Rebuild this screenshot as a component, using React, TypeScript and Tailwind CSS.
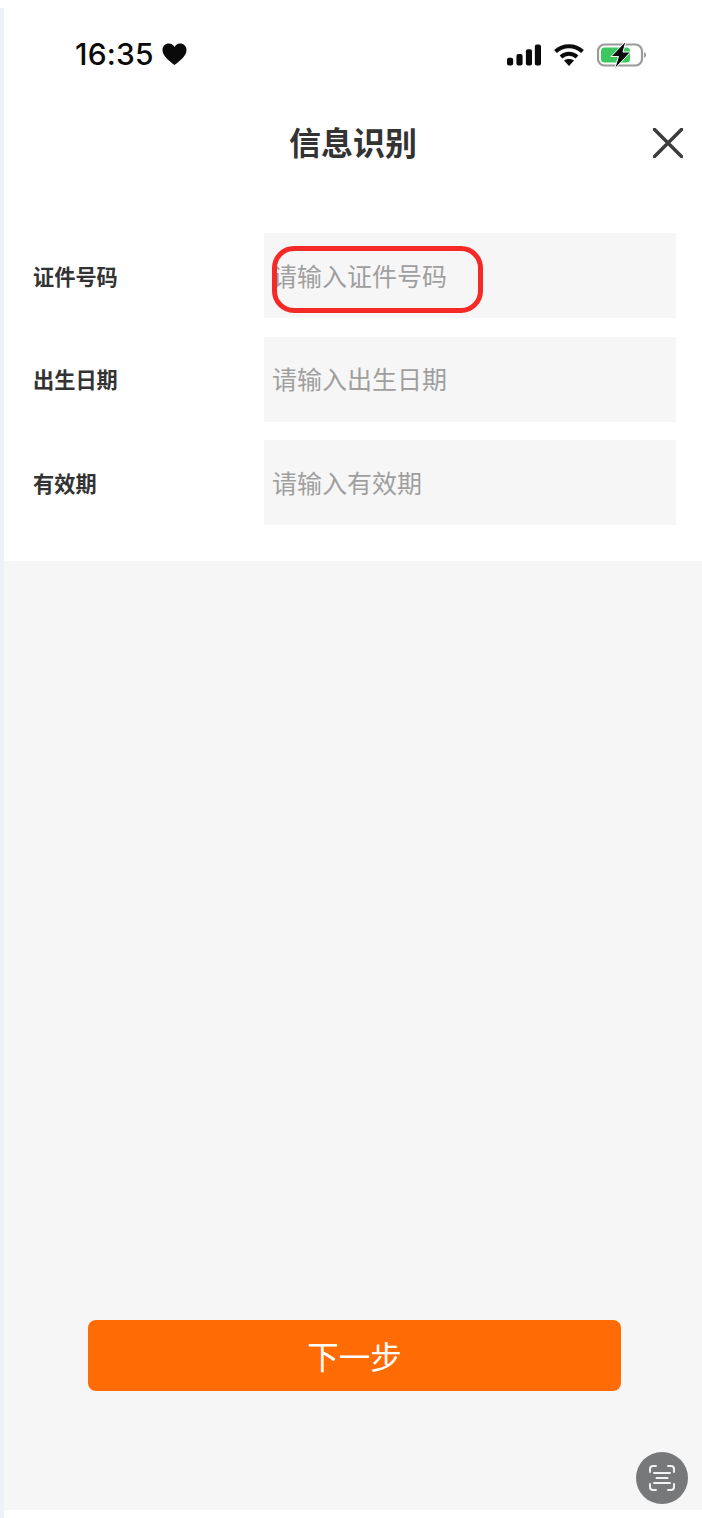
const CJK = "font-['Noto_Sans_CJK_SC','Noto_Sans',sans-serif]";

const FIELDS = [
  { label: "证件号码", placeholder: "请输入证件号码" },
  { label: "出生日期", placeholder: "请输入出生日期" },
  { label: "有效期", placeholder: "请输入有效期" },
];

function StatusIcons() {
  return (
    <div className="flex items-center">
      <svg width="34" height="22" viewBox="0 0 36 22" className="block">
        <rect x="0" y="14" width="6.500" height="8" rx="2" fill="#0a0a0a" />
        <rect x="10" y="10" width="6.500" height="12" rx="2" fill="#0a0a0a" />
        <rect x="20" y="5" width="6.500" height="17" rx="2" fill="#0a0a0a" />
        <rect x="29.500" y="0" width="6.500" height="22" rx="2" fill="#0a0a0a" />
      </svg>
      <svg width="30" height="22" viewBox="0 0 30 22" className="ml-[13px] block">
        <path d="M1.500 7.500C9 .5 21 .5 28.500 7.500" fill="none" stroke="#0a0a0a" strokeWidth="4" />
        <path d="M7 13c4.600-4.200 11.400-4.200 16 0" fill="none" stroke="#0a0a0a" strokeWidth="4" />
        <path d="M10 16.500 15 22l5-5.500c-2.800-2-7.200-2-10 0z" fill="#0a0a0a" />
      </svg>
      <svg width="50" height="28" viewBox="0 0 50 28" className="ml-[13px] block">
        <rect x="1" y="3.500" width="44" height="21" rx="6.500" fill="none" stroke="#9a9a9a" strokeWidth="2.200" />
        <rect x="4" y="6.500" width="29" height="15" rx="3.500" fill="#3cc75f" />
        <path d="M47 11v6c1.200-.5 2-1.700 2-3s-.8-2.500-2-3z" fill="#9a9a9a" />
        <path d="M29 0 14 15.500h7.500L17.500 28 33.500 11h-7.500z" fill="#0a0a0a" stroke="#fff" strokeWidth="1" />
      </svg>
    </div>
  );
}

function FieldRow({ label, placeholder }: { label: string; placeholder: string }) {
  return (
    <div className="flex h-[85px] items-center pr-[26px] pl-[29px]">
      <span className={`w-[231px] text-[21.200px] font-bold text-[#333] ${CJK}`}>{label}</span>
      <div className={`flex h-full flex-1 items-center bg-[#f6f6f6] pl-[8px] text-[25px] text-[#9f9f9f] ${CJK}`}>
        {placeholder}
      </div>
    </div>
  );
}

export default function App() {
  return (
    <div className="relative flex h-[1518px] w-[702px] overflow-hidden bg-white">
      <div className="mt-2 w-1 bg-[#eef1f5]" />
      <div className="flex flex-1 flex-col pb-2">
        <div className="bg-white pb-[36px]">
          <div className="flex h-[110px] items-start justify-between pt-[32px] pr-[55px] pl-[71px]">
            <div className="flex items-center">
              <span className="font-['Inter',sans-serif] text-[30px] leading-[44px] font-medium tracking-[0.2px] text-[#0a0a0a]">
                16:35
              </span>
              <svg width="25" height="22" viewBox="0 0 25 22" className="ml-[8px] block">
                <path d="M12.500 22C6 17 .5 12.500.5 7 .5 3 3.500.5 6.800.5c2.500 0 4.500 1.300 5.700 3.500C13.700 1.800 15.700.5 18.200.5c3.300 0 6.300 2.500 6.300 6.500 0 5.500-5.500 10-12 15z" fill="#0a0a0a" />
              </svg>
            </div>
            <div className="pt-[9px]">
              <StatusIcons />
            </div>
          </div>
          <div className="relative flex h-[66px] items-center justify-center pb-[4px]">
            <span className={`text-[32px] font-semibold text-[#333] ${CJK}`}>信息识别</span>
            <svg width="30" height="30" viewBox="0 0 30 30" className="absolute top-[18px] right-[19px] block">
              <path d="M1.500 1.500 28.500 28.500M28.500 1.500 1.500 28.500" fill="none" stroke="#3c3c3c" strokeWidth="3.500" strokeLinecap="round" />
            </svg>
          </div>
          <div className="mt-[57px] flex flex-col gap-[18.500px]">
            {FIELDS.map((field) => (
              <FieldRow key={field.label} label={field.label} placeholder={field.placeholder} />
            ))}
          </div>
        </div>
        <div className="flex-1 bg-[#f6f6f6] pt-[759px] pr-[81px] pl-[84px]">
          <button className={`h-[71px] w-full rounded-lg bg-[#ff6b05] text-[31.500px] text-white ${CJK}`}>下一步</button>
        </div>
      </div>
      <div className="absolute top-[246px] left-[272px] h-[67px] w-[211px] rounded-[22px] border-[5px] border-[#f52a26]" />
      <div className="absolute top-[1452px] left-[636px] flex h-[52px] w-[52px] items-center justify-center rounded-full bg-[#77787a]">
        <svg width="28" height="28" viewBox="0 0 28 28" className="block" fill="none" stroke="#f2f2f2" strokeWidth="2" strokeLinecap="round">
          <path d="M2 8V5a3 3 0 0 1 3-3h3M20 2h3a3 3 0 0 1 3 3v3M2 20v3a3 3 0 0 0 3 3h3M26 20v3a3 3 0 0 1-3 3h-3" />
          <path d="M6 9h16M8.500 14h11M6 19h16" />
        </svg>
      </div>
    </div>
  );
}
